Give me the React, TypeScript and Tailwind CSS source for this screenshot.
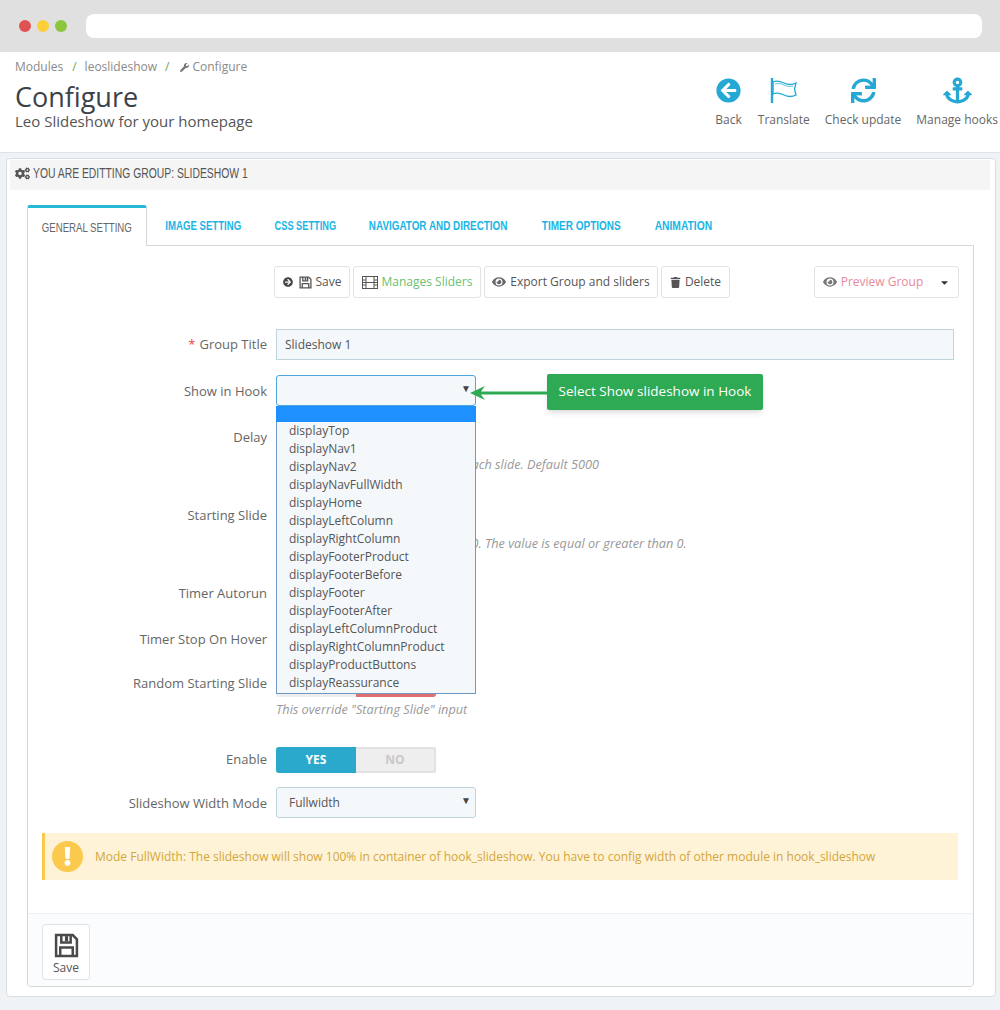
import React from "react";
import { FaArrowCircleLeft, FaSync, FaAnchor, FaCogs, FaWrench, FaEye, FaTrash, FaArrowCircleRight, FaCaretDown, FaExclamation } from "react-icons/fa";

const options = ["displayTop","displayNav1","displayNav2","displayNavFullWidth","displayHome","displayLeftColumn","displayRightColumn","displayFooterProduct","displayFooterBefore","displayFooter","displayFooterAfter","displayLeftColumnProduct","displayRightColumnProduct","displayProductButtons","displayReassurance"];

function Floppy({ size }: { size: number }) {
  return (
    <svg width={size} height={size} viewBox="0 0 24 24" fill="none" stroke="currentColor" strokeWidth="2.4">
      <path d="M2 2h16l4 4v16H2z" />
      <path d="M7 2v7h9V2" />
      <path d="M6 22v-8h12v8" />
      <path d="M12 3v5" strokeWidth="3" />
    </svg>
  );
}

function Film() {
  return (
    <svg width="16" height="13" viewBox="0 0 16 13" fill="none" stroke="currentColor" strokeWidth="1">
      <rect x="0.5" y="0.5" width="15" height="12" />
      <path d="M4 .5v12M12 .5v12M.5 4h3.5M.5 6.5h3.5M.5 9h3.5M12 4h3.5M12 6.5h3.5M12 9h3.5M4 6.5h8" />
    </svg>
  );
}

function Row({ label, top, req, lbl, children }: { label: string; top: string; req?: boolean; lbl?: string; children?: React.ReactNode }) {
  return (
    <div className={`flex items-center ${top}`}>
      <div className={`w-[239px] shrink-0 text-right text-[13px] text-[#666] ${lbl ?? ""}`}>
        {req && <span className="mr-1 text-[#e8453c]">*</span>}
        {label}
      </div>
      <div className="ml-[9px] flex items-center">{children}</div>
    </div>
  );
}

function Select({ value, open }: { value?: string; open?: boolean }) {
  return (
    <div className={`relative flex h-[31px] w-[200px] items-center rounded-[3px] border bg-[#f4f8fb] pl-[12px] text-[12px] text-[#555] ${open ? "border-[#4ba7dc]" : "border-[#c0d4dc]"}`}>
      {value}
      <span className="absolute right-[4px] top-[5px] text-[10px] text-[#444]">▼</span>
    </div>
  );
}

function Switch({ off }: { off?: boolean }) {
  return (
    <div className="flex h-[26px] w-[160px] overflow-hidden rounded-[3px] bg-[#e9e9e9] text-[12px] font-bold">
      <div className={`flex w-[80px] items-center justify-center ${off ? "bg-[#eeeeee] text-[#c8c8c8]" : "bg-[#2aa9cd] text-white"}`}>YES</div>
      <div className={`flex flex-1 items-center justify-center ${off ? "bg-[#e07070] text-white" : "border-2 border-l-0 border-[#e2e2e2] bg-[#eeeeee] text-[#c8c8c8]"}`}>NO</div>
    </div>
  );
}

function Btn({ w, children }: { w: string; children: React.ReactNode }) {
  return <div className={`flex h-[32px] ${w} items-center justify-center gap-1 rounded-[3px] border border-[#dfe3e5] bg-white text-[12px] text-[#555]`}>{children}</div>;
}

function Tool({ label, cls, children }: { label: string; cls?: string; children: React.ReactNode }) {
  return (
    <div className={`flex flex-col items-center ${cls ?? ""}`}>
      <div className="flex h-[30px] items-center text-[#25a9d4]">{children}</div>
      <div className="mt-[7px] text-[12px] leading-[16px] text-[#666]">{label}</div>
    </div>
  );
}

function Tab({ w, ml, sx, label }: { w: string; ml: string; sx: string; label: string }) {
  return (
    <div className={`flex h-[40px] ${w} ${ml} items-center justify-center pt-[1px]`}>
      <span className={`inline-block shrink-0 whitespace-nowrap ${sx}`}>{label}</span>
    </div>
  );
}

const help = "ml-[248px] h-[16px] text-[12.7px] italic leading-[16px] text-[#999]";

export default function App() {
  const narrow = "font-['Liberation_Sans',sans-serif]";
  return (
    <div className="relative h-[1010px] w-[1000px] overflow-hidden bg-[#eff3f6] font-['Open_Sans',sans-serif]">
      <div className="flex h-[52px] items-center bg-[#e0e0e0] pb-[1px] pl-[19px] pr-[18px]">
        <span className="h-3 w-3 rounded-full bg-[#e05252]" />
        <span className="ml-[6px] h-3 w-3 rounded-full bg-[#fdcf3a]" />
        <span className="ml-[6px] h-3 w-3 rounded-full bg-[#8cc63f]" />
        <div className="ml-[19px] h-[24px] flex-1 rounded-[8px] bg-white" />
      </div>

      <div className="flex h-[101px] justify-between border-b border-[#dde3e7] bg-white pl-[15px] pr-[2px]">
        <div>
          <div className="mt-[7px] flex items-center text-[12px] leading-[16px] text-[#8a8a8a]">
            Modules<span className="ml-[9px] mr-[8px] text-[#6aa84f]">/</span>leoslideshow<span className="mx-[8px] text-[#6aa84f]">/</span>
            <FaWrench className="ml-[3px] mr-[3px] text-[9px] text-[#777]" />Configure
          </div>
          <div className="mt-[5px] text-[27px] leading-[34px] text-[#3a4248]">Configure</div>
          <div className="-mt-[3px] text-[15px] leading-[20px] text-[#555]">Leo Slideshow for your homepage</div>
        </div>
        <div className="mt-[23px] flex">
          <Tool label="Back"><FaArrowCircleLeft className="text-[25px]" /></Tool>
          <Tool label="Translate" cls="ml-[16px]">
            <svg width="28" height="26" viewBox="0 0 28 26" fill="none" stroke="currentColor" strokeWidth="1.3">
              <path d="M2 1v25" strokeWidth="2.4" />
              <path d="M3 5c4-2 7-1 11 1s8 2 12 0L24.500 12 26 18c-4 2-8 2-12 0s-7-3-11-1z" />
              <path d="M5 7c3-1 6-.5 9 1s6 2 9 1" strokeWidth=".7" />
            </svg>
          </Tool>
          <Tool label="Check update" cls="ml-[15px]"><FaSync className="text-[25px]" /></Tool>
          <Tool label="Manage hooks" cls="ml-[15px]"><FaAnchor className="text-[29px]" /></Tool>
        </div>
      </div>

      <div className="ml-[6px] mr-[4px] mt-[5px] h-[839px] rounded-[4px] border border-[#d7dfe3] bg-white pl-[3px] pr-[5px] pt-[1px]">
        <div className={`flex h-[30px] items-center gap-[3px] bg-[#f5f5f5] pb-[3px] pl-[5px] text-[14px] text-[#555] ${narrow}`}>
          <FaCogs className="shrink-0 text-[15px]" />
          <span className="inline-block origin-left scale-x-[0.74] whitespace-nowrap">YOU ARE EDITTING GROUP: SLIDESHOW 1</span>
        </div>

        <div className="ml-[17px] mr-[16px] mt-[14px]">
          <div className={`flex h-[41px] items-end text-[13px] font-bold text-[#19b5e6] ${narrow}`}>
            <div className="relative z-10 -mb-px flex h-[41px] w-[120px] shrink-0 items-center justify-center rounded-t-[3px] border-x border-t-[3px] border-[#d3d8db] border-t-[#25b9d7] bg-white pt-[2px] font-normal text-[#666]">
              <span className="inline-block shrink-0 scale-x-[0.74] whitespace-nowrap">GENERAL SETTING</span>
            </div>
            <Tab w="w-[76px]" ml="ml-[18px]" sx="scale-x-[0.74]" label="IMAGE SETTING" />
            <Tab w="w-[61px]" ml="ml-[34px]" sx="scale-x-[0.71]" label="CSS SETTING" />
            <Tab w="w-[139px]" ml="ml-[33px]" sx="scale-x-[0.76]" label="NAVIGATOR AND DIRECTION" />
            <Tab w="w-[79px]" ml="ml-[34px]" sx="scale-x-[0.77]" label="TIMER OPTIONS" />
            <Tab w="w-[58px]" ml="ml-[33px]" sx="scale-x-[0.79]" label="ANIMATION" />
          </div>

          <div className="relative h-[742px] rounded-b-[4px] border border-[#d3d8db]">
            <div className="ml-[246px] mr-[14px] mt-[20px] flex gap-[3px]">
              <Btn w="w-[76px]"><FaArrowCircleRight className="text-[10px] text-[#444]" /><span className="ml-[2px]"><Floppy size={13} /></span>Save</Btn>
              <Btn w="w-[128px]"><Film /><span className="text-[#6cc070]">Manages Sliders</span></Btn>
              <Btn w="w-[174px]"><FaEye className="text-[14px] text-[#666]" />Export Group and sliders</Btn>
              <Btn w="w-[69px]"><FaTrash className="text-[11px] text-[#555]" />Delete</Btn>
              <div className="ml-auto">
                <Btn w="w-[145px]"><FaEye className="text-[14px] text-[#777]" /><span className="text-[#e88a98]">Preview Group</span><FaCaretDown className="ml-[12px] text-[11px] text-[#333]" /></Btn>
              </div>
            </div>

            <Row label="Group Title" req top="mt-[31px]">
              <div className="flex h-[31px] w-[678px] items-center border border-[#c0d4dc] bg-[#f4f8fb] pl-[8px] text-[12px] text-[#555]">Slideshow 1</div>
            </Row>

            <Row label="Show in Hook" top="mt-[15px]" lbl="pt-[2px]">
              <div className="relative">
                <Select open />
                <div className="absolute left-0 top-[31px] z-20 h-[288px] w-[200px] border border-[#6b9ac4] bg-[#f4f8fb] text-[12px] leading-[18px] text-[#555]">
                  <div className="-mx-px -mt-px h-[16px] bg-[#1e90ff]" />
                  {options.map((o) => (
                    <div key={o} className="pl-[12px]">{o}</div>
                  ))}
                </div>
              </div>
              <svg width="78" height="16" viewBox="0 0 78 16" className="z-30 -ml-[6px] mt-[4px] shrink-0 text-[#2eaa54]" fill="currentColor">
                <path d="M0 8 L15 1 L11 6.500 H78 V9.500 H11 L15 15 Z" />
              </svg>
              <div className="-mb-[4px] -ml-px -mt-[2px] flex h-[36px] w-[216px] shrink-0 items-center justify-center rounded-[2px] bg-[#2eaa54] text-[13.500px] text-white shadow-md">Select Show slideshow in Hook</div>
            </Row>

            <Row label="Delay" top="mt-[16px]">
              <div className="h-[31px] w-[200px] border border-[#c0d4dc] bg-[#f4f8fb]" />
            </Row>
            <p className={`${help} mt-[3px]`}>The delays in milliseconds to wait each slide. Default 5000</p>

            <Row label="Starting Slide" top="mt-[28px]">
              <div className="h-[31px] w-[200px] border border-[#c0d4dc] bg-[#f4f8fb]" />
            </Row>
            <p className={`${help} mt-[4px]`}>Index for the starting slide, default 0. The value is equal or greater than 0.</p>

            <Row label="Timer Autorun" top="mt-[30px]"><Switch /></Row>
            <Row label="Timer Stop On Hover" top="mt-[20px]"><Switch /></Row>
            <Row label="Random Starting Slide" top="mt-[18px]"><Switch off /></Row>
            <p className={`${help} mt-[4px]`}>This override "Starting Slide" input</p>

            <Row label="Enable" top="mt-[30px]"><Switch /></Row>
            <Row label="Slideshow Width Mode" top="mt-[14px]" lbl="pt-[2px]"><Select value="Fullwidth" /></Row>

            <div className="ml-[14px] mr-[15px] mt-[15px] flex h-[47px] items-center border-l-[3px] border-[#fcc94f] bg-[#fff3d7] text-[12px] text-[#d2a63c]">
              <div className="ml-[7px] mr-[12px] flex h-[31px] w-[31px] shrink-0 items-center justify-center rounded-full bg-[#fcc94f] text-white">
                <FaExclamation className="text-[19px]" />
              </div>
              Mode FullWidth: The slideshow will show 100% in container of hook_slideshow. You have to config width of other module in hook_slideshow
            </div>

            <div className="absolute inset-x-0 bottom-0 flex h-[73px] items-start rounded-b-[4px] border-t border-[#eef0f1] bg-[#fbfcfd] pl-[14px] pt-[10px]">
              <div className="flex h-[56px] w-[48px] flex-col items-center rounded-[3px] border border-[#dfe3e5] bg-white pt-[8px] text-[12px] leading-[16px] text-[#555]">
                <span className="text-[#4a4a4a]"><Floppy size={25} /></span>
                <span className="mt-[2px]">Save</span>
              </div>
            </div>
          </div>
        </div>
      </div>
    </div>
  );
}
